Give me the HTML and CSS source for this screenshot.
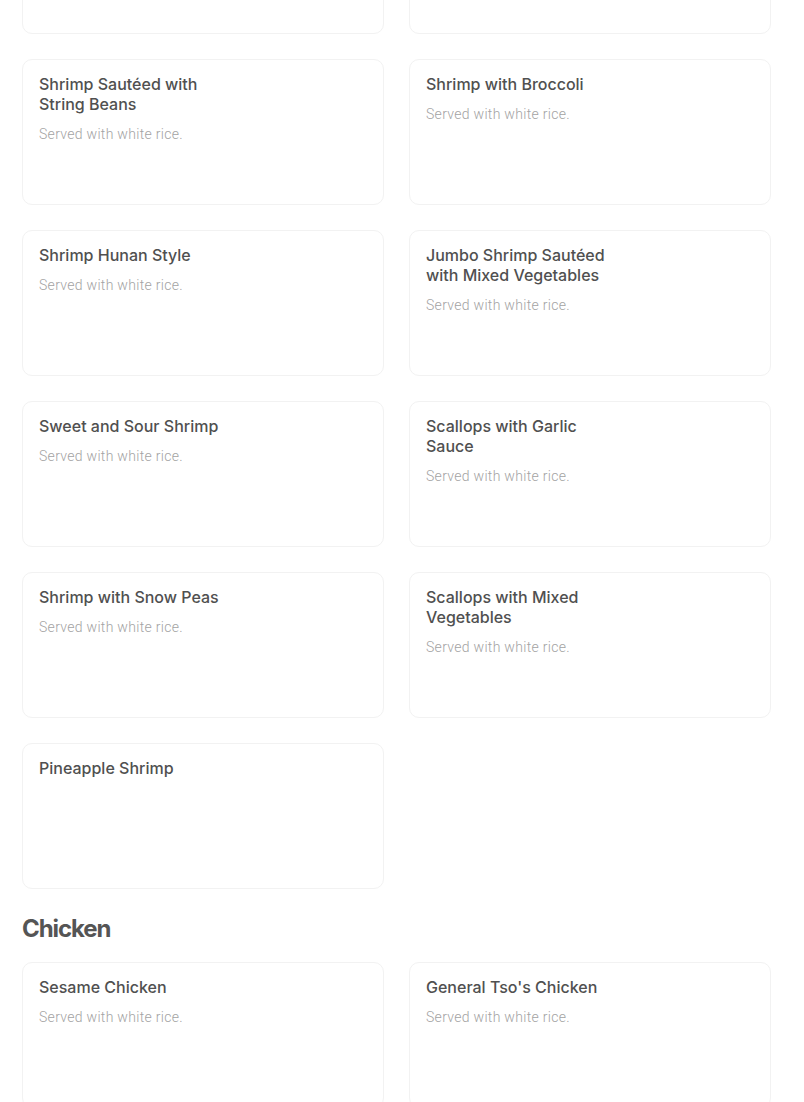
FILE: index.html
```html
<!DOCTYPE html>
<html lang="en">
<head>
<meta charset="utf-8">
<title>Menu</title>
<link rel="stylesheet" href="styles.css">
</head>
<body>
<main class="menu">
  <section class="section section-first">
    <div class="grid">
      <div class="card"></div>
      <div class="card"></div>
      <div class="card"><div class="info"><h3 class="title">Shrimp Sautéed with String Beans</h3><p class="desc">Served with white rice.</p></div></div>
      <div class="card"><div class="info"><h3 class="title">Shrimp with Broccoli</h3><p class="desc">Served with white rice.</p></div></div>
      <div class="card"><div class="info"><h3 class="title">Shrimp Hunan Style</h3><p class="desc">Served with white rice.</p></div></div>
      <div class="card"><div class="info"><h3 class="title">Jumbo Shrimp Sautéed with Mixed Vegetables</h3><p class="desc">Served with white rice.</p></div></div>
      <div class="card"><div class="info"><h3 class="title">Sweet and Sour Shrimp</h3><p class="desc">Served with white rice.</p></div></div>
      <div class="card"><div class="info"><h3 class="title">Scallops with Garlic Sauce</h3><p class="desc">Served with white rice.</p></div></div>
      <div class="card"><div class="info"><h3 class="title">Shrimp with Snow Peas</h3><p class="desc">Served with white rice.</p></div></div>
      <div class="card"><div class="info"><h3 class="title">Scallops with Mixed Vegetables</h3><p class="desc">Served with white rice.</p></div></div>
      <div class="card"><div class="info"><h3 class="title">Pineapple Shrimp</h3></div></div>
    </div>
  </section>
  <section class="section">
    <h2 class="section-title">Chicken</h2>
    <div class="grid">
      <div class="card"><div class="info"><h3 class="title">Sesame Chicken</h3><p class="desc">Served with white rice.</p></div></div>
      <div class="card"><div class="info"><h3 class="title">General Tso's Chicken</h3><p class="desc">Served with white rice.</p></div></div>
    </div>
  </section>
</main>
</body>
</html>
```
FILE: styles.css
```css
html, body {
  margin: 0;
  padding: 0;
  background: #ffffff;
}
body {
  font-family: Roboto, "Liberation Sans", sans-serif;
  color: #4b4b4b;
  overflow: hidden;
}
.menu {
  width: 749px;
  padding: 0 33px 0 22px;
}
.section-first {
  margin-top: -112px;
}
.grid {
  display: grid;
  grid-template-columns: 362px 362px;
  column-gap: 25px;
  row-gap: 25px;
}
.card {
  box-sizing: border-box;
  height: 146px;
  border: 1px solid #f2f2f2;
  border-radius: 10px;
  padding: 14px 16px;
  background: #fff;
}
.info {
  max-width: 192px;
}
.title {
  margin: 0;
  font-family: Inter, Roboto, sans-serif;
  font-size: 16px;
  line-height: 20px;
  font-weight: 500;
  color: #505050;
}
.desc {
  margin: 10px 0 0;
  font-size: 14px;
  line-height: 20px;
  font-weight: 300;
  letter-spacing: 0.3px;
  color: #a3a3a3;
}
.section-title {
  margin: 24px 0 17px;
  font-family: Inter, Roboto, sans-serif;
  font-size: 24px;
  line-height: 32px;
  font-weight: 700;
  color: #555555;
  letter-spacing: -1.1px;
}
```
